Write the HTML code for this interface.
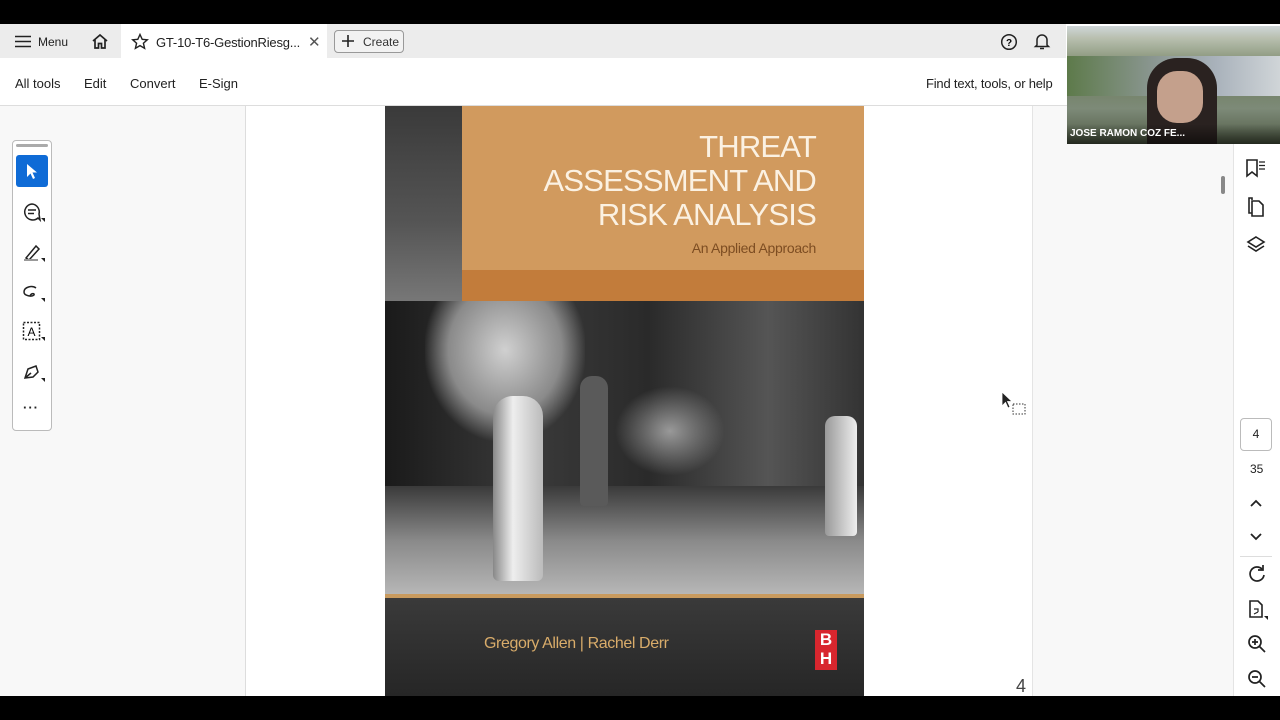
<!DOCTYPE html>
<html><head><meta charset="utf-8"><style>
*{margin:0;padding:0;box-sizing:border-box}
body{width:1280px;height:720px;overflow:hidden;background:#000;font-family:"Liberation Sans",sans-serif;position:relative;color:#222}
.abs{position:absolute}
.tabbar{left:0;top:24px;width:1066px;height:34px;background:#ececec}
.tool{left:0;top:58px;width:1233px;height:48px;background:#fff;border-bottom:1px solid #ddd}
.t{font-size:13px;color:#222;position:absolute}
.left{left:0;top:106px;width:246px;height:590px;background:#f8f8f8;border-right:1px solid #ddd}
.doc{left:246px;top:106px;width:787px;height:590px;background:#fff;border-right:1px solid #e4e4e4}
.rgap{left:1033px;top:106px;width:200px;height:590px;background:#f8f8f8}
.rail{left:1233px;top:106px;width:47px;height:590px;background:#fff;border-left:1px solid #e4e4e4}
svg{position:absolute}
</style></head><body>
<div class="abs tabbar"></div>
<div class="abs" style="left:121px;top:24px;width:206px;height:34px;background:#fff"></div>
<svg style="left:15px;top:35px" width="16" height="13"><path d="M0 1.5H16M0 6.5H16M0 11.5H16" stroke="#222" stroke-width="1.6"/></svg>
<div class="t" style="left:38px;top:35px;font-size:12px">Menu</div>
<svg style="left:91px;top:33px" width="18" height="17"><path d="M2 8L9 2L16 8M4 6.5V15H7.5V10.5H10.5V15H14V6.5" fill="none" stroke="#222" stroke-width="1.7"/></svg>
<svg style="left:131px;top:33px" width="18" height="17"><path d="M9 1.5L11.2 6.3L16.3 6.8L12.4 10.2L13.6 15.3L9 12.6L4.4 15.3L5.6 10.2L1.7 6.8L6.8 6.3Z" fill="none" stroke="#222" stroke-width="1.4"/></svg>
<div class="t" style="left:156px;top:35px;letter-spacing:-0.2px">GT-10-T6-GestionRiesg...</div>
<div class="t" style="left:308px;top:33px;font-size:15px;color:#555">✕</div>
<div class="abs" style="left:334px;top:30px;width:70px;height:23px;border:1px solid #999;border-radius:4px;background:#f2f2f2"></div>
<svg style="left:342px;top:35px" width="12" height="12"><path d="M6 0V12M0 6H12" stroke="#222" stroke-width="1.6"/></svg>
<div class="t" style="left:363px;top:35px;font-size:12px;color:#333">Create</div>
<svg style="left:1000px;top:33px" width="18" height="18"><circle cx="9" cy="9" r="7.3" fill="none" stroke="#222" stroke-width="1.5"/><text x="9" y="13" font-size="10" text-anchor="middle" font-family="Liberation Sans" font-weight="bold">?</text></svg>
<svg style="left:1033px;top:32px" width="18" height="19"><path d="M4 13V8A5 5 0 0 1 14 8V13L15.5 14.5H2.5Z M7 16.5H11" fill="none" stroke="#222" stroke-width="1.5"/></svg>
<div class="abs tool"></div>
<div class="t" style="left:15px;top:76px">All tools</div>
<div class="t" style="left:84px;top:76px">Edit</div>
<div class="t" style="left:130px;top:76px">Convert</div>
<div class="t" style="left:199px;top:76px">E-Sign</div>
<div class="t" style="left:926px;top:76px;letter-spacing:-0.2px">Find text, tools, or help</div>
<div class="abs left"></div>
<div class="abs" style="left:12px;top:140px;width:40px;height:291px;background:#fff;border:1px solid #bbb;border-radius:4px"></div>
<div class="abs" style="left:16px;top:144px;width:32px;height:3px;background:#aaa;border-radius:2px"></div>
<div class="abs" style="left:16px;top:155px;width:32px;height:32px;background:#0f6bd6;border-radius:3px"></div>
<svg style="left:26px;top:163px" width="14" height="18"><path d="M1 1V14L4.5 10.5L7 16L9 15L6.5 9.5H11Z" fill="#fff"/></svg>
<svg style="left:22px;top:202px" width="24" height="22"><path d="M10 2A8 8 0 1 0 16 16L18 18L17 12A8 8 0 0 0 10 2Z M6 8H14M6 11.5H12" fill="none" stroke="#222" stroke-width="1.5"/><path d="M19 16L23 16L23 20Z" fill="#222"/></svg>
<svg style="left:22px;top:242px" width="24" height="22"><path d="M4 16L14 4L17 7L7 18Z" fill="none" stroke="#222" stroke-width="1.5"/><rect x="2" y="17" width="14" height="2" fill="#999"/><path d="M19 16L23 16L23 20Z" fill="#222"/></svg>
<svg style="left:22px;top:282px" width="24" height="22"><path d="M14 6C10 3 2 5 2 10C2 14 10 15 12 13C13 11 9 11 8 14" fill="none" stroke="#222" stroke-width="1.5"/><path d="M19 16L23 16L23 20Z" fill="#222"/></svg>
<svg style="left:22px;top:321px" width="24" height="22"><rect x="1.5" y="1.5" width="16" height="17" fill="none" stroke="#222" stroke-width="1.5" stroke-dasharray="2 1.5"/><text x="9.5" y="15" font-size="12" text-anchor="middle" font-family="Liberation Sans">A</text><path d="M19 16L23 16L23 20Z" fill="#222"/></svg>
<svg style="left:22px;top:362px" width="24" height="22"><path d="M3 16L6 7L14 4L16 10L11 15Z M3 16L9 11" fill="none" stroke="#222" stroke-width="1.5"/><path d="M19 16L23 16L23 20Z" fill="#222"/></svg>
<div class="t" style="left:23px;top:400px;font-weight:bold;letter-spacing:1px">···</div>
<div class="abs doc"></div>
<!-- cover -->
<div class="abs" style="left:385px;top:106px;width:479px;height:590px;overflow:hidden;background:#2a2a2a">
 <div class="abs" style="left:0;top:0;width:77px;height:195px;background:linear-gradient(#3a3a3a,#555 60%,#777)"></div>
 <div class="abs" style="left:77px;top:0;width:402px;height:164px;background:#d19a5e"></div>
 <div class="abs" style="left:77px;top:164px;width:402px;height:31px;background:#c27c3b"></div>
 <div class="abs" style="right:48px;top:24px;color:#fbf1e2;font-size:31px;line-height:34px;text-align:right;letter-spacing:-0.8px">THREAT<br>ASSESSMENT AND<br>RISK ANALYSIS</div>
 <div class="abs" style="right:48px;top:134px;color:#7d4d22;font-size:14px;letter-spacing:-0.3px">An Applied Approach</div>
 <div class="abs" style="left:0;top:195px;width:479px;height:295px;background:linear-gradient(90deg,#1a1a1a,#3a3a3a 30%,#2a2a2a 55%,#555 80%,#333);"></div>
 <div class="abs" style="left:0;top:380px;width:479px;height:110px;background:linear-gradient(#3a3a3a,#8a8a8a 50%,#b8b8b8)"></div>
 <div class="abs" style="left:40px;top:195px;width:160px;height:140px;background:radial-gradient(ellipse at 50% 35%,#d0d0d0,#8a8a8a 50%,transparent 72%)"></div>
 <div class="abs" style="left:108px;top:290px;width:50px;height:185px;background:linear-gradient(90deg,#888,#eee 40%,#bbb);border-radius:20px 20px 6px 6px"></div>
 <div class="abs" style="left:195px;top:270px;width:28px;height:130px;background:#5a5a5a;border-radius:12px 12px 4px 4px"></div>
 <div class="abs" style="left:230px;top:280px;width:110px;height:90px;background:radial-gradient(ellipse,#999,transparent 70%)"></div>
 <div class="abs" style="left:440px;top:310px;width:32px;height:120px;background:linear-gradient(90deg,#999,#eee);border-radius:10px 10px 4px 4px"></div>
 <div class="abs" style="left:0;top:488px;width:479px;height:4px;background:#c89a5e"></div>
 <div class="abs" style="left:0;top:492px;width:479px;height:98px;background:linear-gradient(#3a3a3a,#262626)"></div>
 <div class="abs" style="left:99px;top:529px;color:#d9ac6a;font-size:16px;letter-spacing:-0.4px">Gregory Allen | Rachel Derr</div>
 <div class="abs" style="left:430px;top:524px;width:22px;height:40px;background:#d8262e;color:#fff;font-weight:bold;font-size:17px;line-height:19px;text-align:center">B<br>H</div>
</div>
<div class="t" style="left:1016px;top:676px;font-size:18px;color:#444">4</div>
<svg style="left:1001px;top:391px" width="26" height="25"><path d="M1 1V15L4.5 11.5L7 17L9 16L6.5 10.5H11Z" fill="#222" stroke="#fff" stroke-width="0.8"/><rect x="12" y="13" width="12" height="10" fill="none" stroke="#333" stroke-dasharray="1.5 1.5"/></svg>
<div class="abs rgap"></div>
<div class="abs" style="left:1221px;top:176px;width:4px;height:18px;background:#888;border-radius:2px"></div>
<div class="abs rail"></div>
<div class="abs" style="left:1066px;top:24px;width:214px;height:34px;background:#fff"></div>
<!-- webcam -->
<div class="abs" style="left:1067px;top:26px;width:213px;height:118px;overflow:hidden;background:linear-gradient(#cfd6d8 0,#b9c0b0 10%,#6d7d5c 40%,#7d8a78 70%,#4f5a44)">
 <div class="abs" style="left:0;top:30px;width:213px;height:40px;background:linear-gradient(90deg,#5d7a4a,#8a9690 40%,#a9b2bb 70%,#d0d5d8)"></div>
 <div class="abs" style="left:80px;top:32px;width:70px;height:95px;background:#2a2220;border-radius:30px 30px 6px 6px"></div>
 <div class="abs" style="left:90px;top:45px;width:46px;height:52px;background:#c4a08c;border-radius:20px"></div>
 <div class="abs" style="left:0;top:98px;width:213px;height:20px;background:linear-gradient(transparent,rgba(0,0,0,.55))"></div>
 <div class="abs" style="left:3px;top:102px;color:#fff;font-size:10px;font-weight:bold">JOSE RAMON COZ FE...</div>
</div>
<svg style="left:1245px;top:158px" width="22" height="20"><path d="M2 2H12V18L7 14L2 18Z" fill="none" stroke="#222" stroke-width="1.6"/><path d="M14 4H20M14 7.5H20M14 11H20" stroke="#222" stroke-width="1.2"/></svg>
<svg style="left:1246px;top:196px" width="20" height="22"><path d="M6 4V2H3V17H6" fill="none" stroke="#222" stroke-width="1.6"/><path d="M6 5H13L17 9V20H6Z" fill="none" stroke="#222" stroke-width="1.6"/></svg>
<svg style="left:1246px;top:235px" width="20" height="20"><path d="M10 2L18 7L10 12L2 7Z M2 11L10 16L18 11" fill="none" stroke="#222" stroke-width="1.6"/></svg>
<div class="abs" style="left:1240px;top:418px;width:32px;height:33px;border:1px solid #bbb;border-radius:4px;background:#fff;font-size:12px;text-align:center;line-height:31px">4</div>
<div class="t" style="left:1250px;top:462px;font-size:12px">35</div>
<svg style="left:1250px;top:499px" width="12" height="8"><path d="M1 7L6 2L11 7" fill="none" stroke="#222" stroke-width="1.8"/></svg>
<svg style="left:1250px;top:533px" width="12" height="8"><path d="M1 1L6 6L11 1" fill="none" stroke="#222" stroke-width="1.8"/></svg>
<div class="abs" style="left:1240px;top:556px;width:32px;height:1px;background:#ddd"></div>
<svg style="left:1247px;top:564px" width="20" height="20"><path d="M15 5A7 7 0 1 0 17 11" fill="none" stroke="#222" stroke-width="1.7"/><path d="M11 6H16V1" fill="none" stroke="#222" stroke-width="1.7"/></svg>
<svg style="left:1247px;top:599px" width="22" height="22"><path d="M3 2H11L15 6V18H3Z" fill="none" stroke="#222" stroke-width="1.6"/><path d="M7 10H11V13M11 13L7 15" fill="none" stroke="#222" stroke-width="1.2"/><path d="M17 17L21 17L21 21Z" fill="#222"/></svg>
<svg style="left:1247px;top:634px" width="20" height="20"><circle cx="8" cy="8" r="6" fill="none" stroke="#222" stroke-width="1.7"/><path d="M12.5 12.5L18 18M5 8H11M8 5V11" stroke="#222" stroke-width="1.7"/></svg>
<svg style="left:1247px;top:669px" width="20" height="20"><circle cx="8" cy="8" r="6" fill="none" stroke="#222" stroke-width="1.7"/><path d="M12.5 12.5L18 18M5 8H11" stroke="#222" stroke-width="1.7"/></svg>
</body></html>
